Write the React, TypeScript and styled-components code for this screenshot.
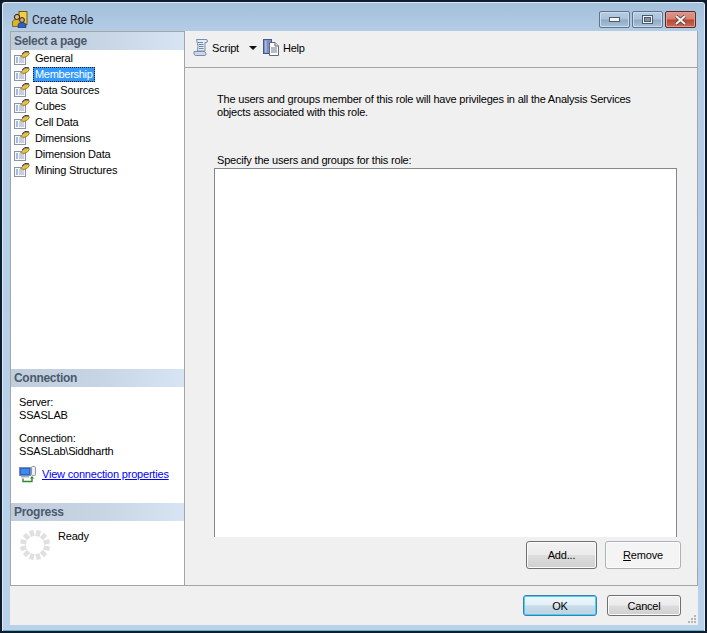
import React from 'react'
import styled, { createGlobalStyle } from 'styled-components'

const GlobalStyle = createGlobalStyle`
  html, body { margin: 0; padding: 0; background: #0f1c2c; }
  #root { width: 707px; height: 633px; overflow: hidden; }
  * { box-sizing: border-box; }
`

const Window = styled.div`
  width: 707px;
  height: 633px;
  display: flex;
  flex-direction: column;
  padding: 0 7px 6px 8px;
  background: linear-gradient(180deg, #a3bfdb 0, #b4cde6 30px, #b9d2ea 100%);
  border: 2px solid #101d2e;
  border-top-left-radius: 5px;
  border-top-right-radius: 5px;
  box-shadow: inset 1px 1px 0 #dfeaf5, inset -1px 0 0 #dfeaf5, inset 0 -1px 0 #5fb8c4;
  font-family: 'Liberation Sans', Arial, sans-serif;
  font-size: 11px;
  letter-spacing: -0.2px;
  color: #000;
`

const TitleBar = styled.div`
  height: 29px;
  flex: none;
  display: flex;
  align-items: center;
  padding: 6px 2px 0 2px;
  font-family: Roboto, 'Liberation Sans', sans-serif;
  font-size: 12px;
  letter-spacing: 0;
  color: #1b2430;
`

const TitleText = styled.span`
  margin-left: 4px;
  flex: 1;
`

const CaptionButton = styled.div<{ $close?: boolean }>`
  width: 31px;
  height: 17px;
  margin-left: 2px;
  display: flex;
  align-items: center;
  justify-content: center;
  border: 1px solid ${(p) => (p.$close ? '#5a2a30' : '#5f7389')};
  border-radius: 2px;
  box-shadow: inset 0 0 0 1px ${(p) => (p.$close ? '#e0a090' : '#c9dbec')};
  background: ${(p) =>
    p.$close
      ? 'linear-gradient(180deg,#dc9588 0,#d58273 48%,#b8452f 52%,#c96e58 100%)'
      : 'linear-gradient(180deg,#b6cde3 0,#a9c2da 48%,#8ea9c4 52%,#a8c2da 100%)'};
`

const Client = styled.div`
  flex: 1;
  min-height: 0;
  display: flex;
  flex-direction: column;
  background: #f0f0f0;
`

const Main = styled.div`
  flex: 1;
  min-height: 0;
  display: flex;
`

const SidePanel = styled.div`
  width: 175px;
  flex: none;
  display: flex;
  flex-direction: column;
  background: #fff;
  border: 1px solid #a5a5a5;
`

const SectionHeader = styled.div`
  height: 18px;
  flex: none;
  padding: 0 3px;
  line-height: 18px;
  font-size: 12px;
  font-weight: bold;
  color: #4c5a6b;
  letter-spacing: -0.3px;
  background: linear-gradient(90deg, #bfcddd 0, #c6d4e4 50%, #d6e4f3 100%);
`

const NavList = styled.div`
  flex: 1;
`

const NavRow = styled.div`
  height: 16px;
  display: flex;
  align-items: center;
  padding-left: 3px;
`

const NavLabel = styled.span<{ $selected?: boolean }>`
  margin-left: ${(p) => (p.$selected ? '3px' : '5px')};
  padding: ${(p) => (p.$selected ? '0 2px' : '0')};
  line-height: 15px;
  letter-spacing: ${(p) => (p.$selected ? '-0.3px' : '-0.2px')};
  color: ${(p) => (p.$selected ? '#fff' : '#000')};
  background: ${(p) => (p.$selected ? '#3399ff' : 'transparent')};
  outline: ${(p) => (p.$selected ? '1px dotted #1a1a1a' : 'none')};
  outline-offset: -1px;
`

const ConnectionBody = styled.div`
  height: 116px;
  flex: none;
  padding: 9px 8px 0;
  line-height: 13px;
`

const InfoGroup = styled.div`
  margin-bottom: 8px;
  & + & {
    margin-top: 10px;
  }
`

const LinkRow = styled.div`
  display: flex;
  align-items: center;
  gap: 5px;
`

const PropsLink = styled.a`
  color: #0000ff;
  text-decoration: underline;
`

const ProgressBody = styled.div`
  height: 64px;
  flex: none;
  display: flex;
  align-items: flex-start;
  padding: 8px 0 0 9px;
  gap: 8px;
`

const ReadyText = styled.span`
  line-height: 14px;
`

const Content = styled.div`
  flex: 1;
  min-width: 0;
  display: flex;
  flex-direction: column;
  border-bottom: 1px solid #a5a5a5;
`

const Toolbar = styled.div`
  height: 37px;
  flex: none;
  display: flex;
  align-items: center;
  padding: 0 0 3px 8px;
  border-bottom: 1px solid #a5a5a5;
  border-right: 1px solid #a5a5a5;
`

const ToolLabel = styled.span`
  margin-left: 3px;
`

const DropArrow = styled.svg`
  margin: 0 6px 0 10px;
`

const Body = styled.div`
  flex: 1;
  min-height: 0;
  display: flex;
  flex-direction: column;
  padding: 25px 20px 0 29px;
  border-right: 1px solid #a5a5a5;
`

const Description = styled.p`
  margin: 0 0 0 3px;
  line-height: 13px;
  width: 425px;
`

const ListCaption = styled.label`
  display: block;
  margin: 35px 0 1px 3px;
  line-height: 13px;
`

const ListBox = styled.div`
  flex: 1;
  min-height: 0;
  background: #fff;
  border: 1px solid #828790;
  border-bottom: 0;
`

const ActionRow = styled.div`
  height: 48px;
  flex: none;
  display: flex;
  justify-content: flex-end;
  align-items: flex-start;
  gap: 8px;
  padding: 4px 0 0 0;
  margin-right: -4px;
`

const Button = styled.button<{ $w: number; $h: number; $state?: 'focus' | 'disabled' }>`
  width: ${(p) => p.$w}px;
  height: ${(p) => p.$h}px;
  padding: 0;
  font: inherit;
  letter-spacing: inherit;
  color: #000;
  border-radius: 3px;
  border: 1px solid ${(p) => (p.$state === 'focus' ? '#3c7fb1' : p.$state === 'disabled' ? '#adb2b5' : '#707070')};
  box-shadow: inset 0 0 0 1px ${(p) => (p.$state === 'focus' ? '#48d0f5' : '#fbfbfb')};
  background: ${(p) =>
    p.$state === 'disabled'
      ? '#f4f4f4'
      : p.$state === 'focus'
      ? 'linear-gradient(180deg,#f0f7fb 0,#e2eef6 48%,#c6dbe8 52%,#bcd4e3 100%)'
      : 'linear-gradient(180deg,#f2f2f2 0,#ebebeb 48%,#dddddd 52%,#cfcfcf 100%)'};
`

const Footer = styled.div`
  height: 39px;
  flex: none;
  position: relative;
  display: flex;
  justify-content: flex-end;
  align-items: flex-start;
  gap: 10px;
  padding: 9px 17px 0 0;
`

const Grip = styled.svg`
  position: absolute;
  right: 1px;
  bottom: 1px;
`

const pages = ['General', 'Membership', 'Data Sources', 'Cubes', 'Cell Data', 'Dimensions', 'Dimension Data', 'Mining Structures']

const PageIcon = () => (
  <svg width="16" height="16" viewBox="0 0 16 16">
    <rect x="0.5" y="5.5" width="11" height="9" fill="#f7f8fb" stroke="#8a93a8" />
    <path d="M2 8h2M2 10h2M2 12h2" stroke="#5b7fc0" />
    <path d="M5 8h5M5 10h5M5 12h5" stroke="#9aa4b8" />
    <path d="M6.500 6.500L10 3L13 2L15.500 3L13.500 6L10 7.500Z" fill="#eebf45" stroke="#7a6420" strokeWidth="0.7" />
    <path d="M8 3.800L11 1.500L15 1.800" fill="none" stroke="#333" strokeWidth="1" />
  </svg>
)

const RoleIcon = () => (
  <svg width="16" height="18" viewBox="0 0 16 18">
    <rect x="7" y="0.5" width="8" height="13" fill="#f0d040" stroke="#6b5a10" />
    <circle cx="5" cy="6" r="2.6" fill="#e2b48c" stroke="#2a1c14" />
    <path d="M0.5 15.5V11q0-2.5 4.5-2.500T9.500 11v4.500Z" fill="#d8b820" stroke="#5b4a10" strokeWidth="0.7" />
    <circle cx="10" cy="9" r="2.400" fill="#d8a880" stroke="#2a1c14" />
    <path d="M6 16.500V14q0-2.500 4-2.500t4 2.500v2.500Z" fill="#2f5fc0" stroke="#1a2f70" strokeWidth="0.7" />
  </svg>
)

const ScriptIcon = () => (
  <svg width="16" height="17" viewBox="0 0 16 17">
    <path d="M3.500 0.500H13q1.500 0 1.500 1.500T13 3.500H12V12H4.500Q6 8 3.500 0.500Z" fill="#e4ecf6" stroke="#7a8ca8" />
    <path d="M5 3.500h5M5.500 5.500h5M6 7.500h4.500M6 9.500h4.500" stroke="#6d86ad" />
    <path d="M1 12.500H11q1.500 0 2 2t-2 2H2.500q-2 0-1.500-4Z" fill="#ccd8e8" stroke="#7a8ca8" />
  </svg>
)

const HelpIcon = () => (
  <svg width="17" height="17" viewBox="0 0 17 17">
    <rect x="0.500" y="0.500" width="8" height="14" fill="#7c90c4" stroke="#46578c" />
    <rect x="2" y="1.500" width="1.500" height="12" fill="#aebce0" />
    <path d="M6.500 3.500H12L15.500 7V16.500H6.500Z" fill="#fdfdfd" stroke="#606a80" />
    <path d="M12 3.500V7H15.500" fill="#dfe3ea" stroke="#606a80" />
    <path d="M8 9h6M8 11h6M8 13h6" stroke="#70788a" />
  </svg>
)

const ServerIcon = () => (
  <svg width="18" height="17" viewBox="0 0 18 17">
    <rect x="0.500" y="1.500" width="11" height="8" fill="#2a62d8" stroke="#7f8ca8" />
    <rect x="2" y="3" width="8" height="5" fill="#3c8cf0" />
    <rect x="2" y="10" width="8" height="1.500" fill="#a8b0c0" />
    <rect x="12.500" y="0.500" width="4" height="9" rx="1" fill="#eceef2" stroke="#8f96a3" />
    <path d="M4 12.500V15.500H13V11" fill="none" stroke="#2a8a2a" strokeWidth="1.400" />
    <path d="M11 12.500L13 10L15 12.500Z" fill="#2a8a2a" />
  </svg>
)

const Spinner = () => (
  <svg width="30" height="30" viewBox="0 0 30 30" style={{ marginTop: 1 }}>
    {Array.from({ length: 12 }, (_, i) => (
      <rect key={i} x="12.800" y="0" width="4.400" height="6" fill="#e0e0e0" transform={`rotate(${i * 30 + 15} 15 15)`} />
    ))}
  </svg>
)

const App: React.FC = () => (
  <>
    <GlobalStyle />
    <Window>
      <TitleBar>
        <RoleIcon />
        <TitleText>Create Role</TitleText>
        <CaptionButton>
          <svg width="11" height="5"><rect x="0.500" y="0.500" width="10" height="4" fill="#f4f6f8" stroke="#4d5a68" /></svg>
        </CaptionButton>
        <CaptionButton>
          <svg width="11" height="9"><rect x="1" y="1" width="9" height="7" fill="none" stroke="#f0f3f6" strokeWidth="2" /><rect x="0.500" y="0.500" width="10" height="8" fill="none" stroke="#4d5a68" /><rect x="2.500" y="2.500" width="6" height="4" fill="#7d93ab" stroke="#4d5a68" /></svg>
        </CaptionButton>
        <CaptionButton $close>
          <svg width="13" height="10" viewBox="0 0 13 10"><path d="M2 1L11 9M11 1L2 9" stroke="#4a3a3a" strokeWidth="3.600" /><path d="M2 1L11 9M11 1L2 9" stroke="#f2f2f2" strokeWidth="2.200" /></svg>
        </CaptionButton>
      </TitleBar>
      <Client>
        <Main>
          <SidePanel>
            <SectionHeader>Select a page</SectionHeader>
            <NavList>
              {pages.map((page, i) => (
                <NavRow key={page}>
                  <PageIcon />
                  <NavLabel $selected={i === 1}>{page}</NavLabel>
                </NavRow>
              ))}
            </NavList>
            <SectionHeader>Connection</SectionHeader>
            <ConnectionBody>
              <InfoGroup>Server:<br />SSASLAB</InfoGroup>
              <InfoGroup>Connection:<br />SSASLab\Siddharth</InfoGroup>
              <LinkRow>
                <ServerIcon />
                <PropsLink href="#">View connection properties</PropsLink>
              </LinkRow>
            </ConnectionBody>
            <SectionHeader>Progress</SectionHeader>
            <ProgressBody>
              <Spinner />
              <ReadyText>Ready</ReadyText>
            </ProgressBody>
          </SidePanel>
          <Content>
            <Toolbar>
              <ScriptIcon />
              <ToolLabel>Script</ToolLabel>
              <DropArrow width="8" height="4" viewBox="0 0 8 4"><path d="M0 0H8L4 4Z" fill="#111" /></DropArrow>
              <HelpIcon />
              <ToolLabel>Help</ToolLabel>
            </Toolbar>
            <Body>
              <Description>
                The users and groups member of this role will have privileges in all the Analysis Services objects associated with this role.
              </Description>
              <ListCaption>Specify the users and groups for this role:</ListCaption>
              <ListBox />
              <ActionRow>
                <Button $w={71} $h={28}>Add...</Button>
                <Button $w={76} $h={28} $state="disabled"><u>R</u>emove</Button>
              </ActionRow>
            </Body>
          </Content>
        </Main>
        <Footer>
          <Button $w={74} $h={21} $state="focus">OK</Button>
          <Button $w={74} $h={21}>Cancel</Button>
          <Grip width="10" height="10" viewBox="0 0 10 10">
            <path d="M7 1h2v2H7zM4 4h2v2H4zM7 4h2v2H7zM1 7h2v2H1zM4 7h2v2H4zM7 7h2v2H7z" fill="#b5b5b5" />
          </Grip>
        </Footer>
      </Client>
    </Window>
  </>
)

export default App
